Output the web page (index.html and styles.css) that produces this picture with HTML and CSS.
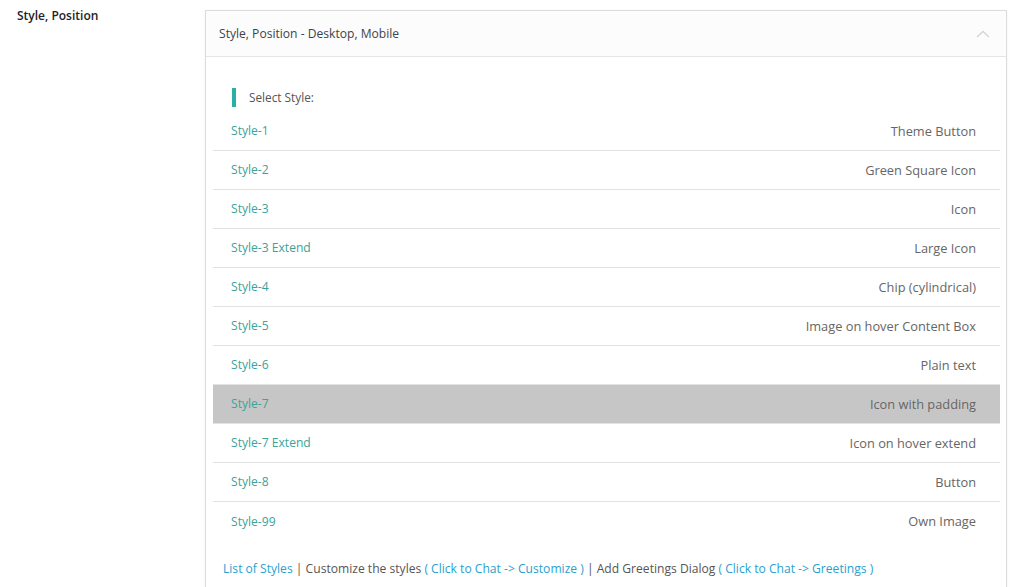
FILE: index.html
```html
<!DOCTYPE html>
<html lang="en">
<head>
  <meta charset="UTF-8" />
  <title>Style, Position</title>
  <link rel="stylesheet" href="styles.css">
</head>
<body>
  <div class="setting-row">
    <div class="setting-label">Style, Position</div>

    <div class="panel">
      <div class="panel-head">
        <span>Style, Position - Desktop, Mobile</span>
        <svg class="chevron" width="14" height="8" viewBox="0 0 14 8">
          <path d="M1 7 L7 1.5 L13 7" fill="none" stroke="#d4d4d4" stroke-width="1.3"/>
        </svg>
      </div>

      <div class="panel-body">
        <div class="select-title">Select Style:</div>

        <ul class="style-list">
          <li><span class="style-name">Style-1</span><span class="style-desc">Theme Button</span></li>
          <li><span class="style-name">Style-2</span><span class="style-desc">Green Square Icon</span></li>
          <li><span class="style-name">Style-3</span><span class="style-desc">Icon</span></li>
          <li><span class="style-name">Style-3 Extend</span><span class="style-desc">Large Icon</span></li>
          <li><span class="style-name">Style-4</span><span class="style-desc">Chip (cylindrical)</span></li>
          <li><span class="style-name">Style-5</span><span class="style-desc">Image on hover Content Box</span></li>
          <li><span class="style-name">Style-6</span><span class="style-desc">Plain text</span></li>
          <li class="active"><span class="style-name">Style-7</span><span class="style-desc">Icon with padding</span></li>
          <li><span class="style-name">Style-7 Extend</span><span class="style-desc">Icon on hover extend</span></li>
          <li><span class="style-name">Style-8</span><span class="style-desc">Button</span></li>
          <li><span class="style-name">Style-99</span><span class="style-desc">Own Image</span></li>
        </ul>

        <p class="help-links">
          <a href="#">List of Styles</a> | Customize the styles <a href="#">( Click to Chat -&gt; Customize )</a> | Add Greetings Dialog <a href="#">( Click to Chat -&gt; Greetings )</a>
        </p>
      </div>
    </div>
  </div>
</body>
</html>
```

FILE: styles.css
```css
:root {
  --teal: #3aa39a;
  --link: #2a9fd0;
  --text: #555555;
  --border: #e2e2e2;
}

* {
  box-sizing: border-box;
  margin: 0;
  padding: 0;
}

body {
  font-family: "Open Sans", "Noto Sans", sans-serif;
  font-size: 12.1px;
  color: var(--text);
  background-color: #ffffff;
  padding: 10px 17px 0 17px;
}

.setting-row {
  display: flex;
  align-items: flex-start;
}

.setting-label {
  width: 188px;
  flex-shrink: 0;
  font-weight: 600;
  font-size: 12px;
  color: #1d2327;
  line-height: 12px;
}

.panel {
  width: 802px;
  border: 1px solid #dcdcdc;
  box-shadow: 0 1px 3px rgba(0, 0, 0, 0.06);
  background-color: #ffffff;
  height: 600px;
}

.panel-head {
  display: flex;
  align-items: center;
  justify-content: space-between;
  height: 46px;
  padding: 0 16px 0 13px;
  background-color: #fcfcfc;
  border-bottom: 1px solid #e6e6e6;
  color: #3c434a;
}

.panel-body {
  padding: 31px 6px 0 7px;
}

.select-title {
  border-left: 4px solid #2bb0a4;
  margin-left: 19px;
  padding-left: 13px;
  height: 19px;
  line-height: 19px;
  font-size: 11.8px;
  color: #555555;
}

.style-list {
  list-style: none;
  margin-top: 5px;
}

.style-list li {
  display: flex;
  justify-content: space-between;
  align-items: center;
  height: 39px;
  padding: 0 24px 1px 18px;
  border-bottom: 1px solid var(--border);
}

.style-list li:last-child {
  border-bottom: none;
}

.style-list li.active {
  background-color: #c6c6c6;
}

.style-name {
  color: var(--teal);
}

.style-desc {
  font-size: 12.8px;
  color: #666666;
}

.help-links {
  margin-top: 19px;
  padding-left: 10px;
  color: #555555;
}

.help-links a {
  color: var(--link);
  text-decoration: none;
}
```
